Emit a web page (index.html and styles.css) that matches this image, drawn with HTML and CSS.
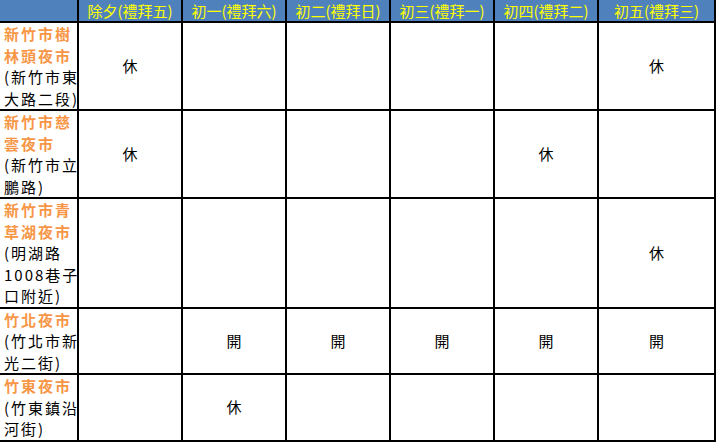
FILE: index.html
```html
<!DOCTYPE html>
<html lang="zh-Hant">
<head>
<meta charset="utf-8">
<title>夜市春節營業表</title>
<link rel="stylesheet" href="styles.css">
</head>
<body>
<table class="grid">
  <colgroup>
    <col class="c-name">
    <col class="c-day">
    <col class="c-day">
    <col class="c-day">
    <col class="c-day">
    <col class="c-day">
    <col class="c-last">
  </colgroup>
  <thead>
    <tr class="head">
      <th class="corner"></th>
      <th>除夕(禮拜五)</th>
      <th>初一(禮拜六)</th>
      <th>初二(禮拜日)</th>
      <th>初三(禮拜一)</th>
      <th>初四(禮拜二)</th>
      <th>初五(禮拜三)</th>
    </tr>
  </thead>
  <tbody>
    <tr>
      <td class="name"><div class="market">新竹市樹<br>林頭夜市</div><div class="addr">(新竹市東<br>大路二段)</div></td>
      <td>休</td><td></td><td></td><td></td><td></td><td>休</td>
    </tr>
    <tr>
      <td class="name"><div class="market">新竹市慈<br>雲夜市</div><div class="addr">(新竹市立<br>鵬路)</div></td>
      <td>休</td><td></td><td></td><td></td><td>休</td><td></td>
    </tr>
    <tr>
      <td class="name"><div class="market">新竹市青<br>草湖夜市</div><div class="addr">(明湖路<br>1008巷子<br>口附近)</div></td>
      <td></td><td></td><td></td><td></td><td></td><td>休</td>
    </tr>
    <tr>
      <td class="name"><div class="market">竹北夜市</div><div class="addr">(竹北市新<br>光二街)</div></td>
      <td></td><td>開</td><td>開</td><td>開</td><td>開</td><td>開</td>
    </tr>
    <tr>
      <td class="name"><div class="market">竹東夜市</div><div class="addr">(竹東鎮沿<br>河街)</div></td>
      <td></td><td>休</td><td></td><td></td><td></td><td></td>
    </tr>
  </tbody>
</table>
</body>
</html>
```
FILE: styles.css
```css
html, body {
  margin: 0;
  padding: 0;
  background: #ffffff;
}

.grid {
  border-collapse: separate;
  border-spacing: 0;
  table-layout: fixed;
  width: 716px;
  font-family: "Noto Sans CJK TC", "Noto Sans", sans-serif;
  color: #000000;
}

.c-name { width: 79px; }
.c-day { width: 104px; }
.c-last { width: 117px; }

.head th {
  background: #4f81bd;
  color: #ffff00;
  font-weight: normal;
  font-size: 15px;
  line-height: 21px;
  height: 21px;
  padding: 0;
  text-align: center;
  white-space: nowrap;
  border-right: 2px solid #000000;
  border-bottom: 2px solid #000000;
}

tbody td {
  padding: 0;
  font-size: 15px;
  line-height: 20px;
  text-align: center;
  vertical-align: middle;
  border-right: 2px solid #000000;
  border-bottom: 2px solid #000000;
}

tbody td.name {
  text-align: left;
  padding: 0 0 0 4px;
  letter-spacing: 2px;
  white-space: nowrap;
  vertical-align: top;
  line-height: 21.5px;
}

.market {
  color: #f79646;
  font-weight: bold;
}

.addr {
  color: #000000;
}
```
